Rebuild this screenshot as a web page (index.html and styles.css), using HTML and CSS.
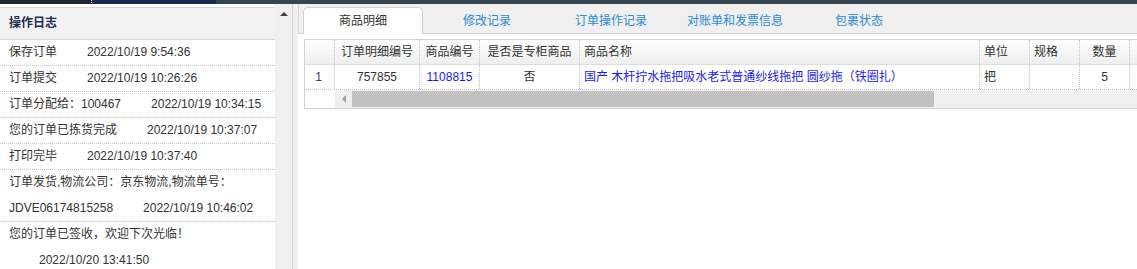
FILE: index.html
```html
<!DOCTYPE html>
<html lang="zh-CN">
<head>
<meta charset="utf-8">
<title>订单详情</title>
<link rel="stylesheet" href="styles.css">
</head>
<body>
<div class="topbar">
  <div class="seg-a"></div>
  <div class="seg-dot"></div>
  <div class="seg-b"></div>
  <div class="seg-c"></div>
</div>
<div class="main">
  <aside class="log">
    <div class="log-head">操作日志</div>
    <div class="log-row"><span>保存订单</span><span class="t">2022/10/19 9:54:36</span></div>
    <div class="log-row"><span>订单提交</span><span class="t">2022/10/19 10:26:26</span></div>
    <div class="log-row"><span>订单分配给：100467</span><span class="t">2022/10/19 10:34:15</span></div>
    <div class="log-row"><span>您的订单已拣货完成</span><span class="t">2022/10/19 10:37:07</span></div>
    <div class="log-row"><span>打印完毕</span><span class="t">2022/10/19 10:37:40</span></div>
    <div class="log-row multi">
      <div class="line">订单发货,物流公司：京东物流,物流单号：</div>
      <div class="line"><span>JDVE06174815258</span><span class="t">2022/10/19 10:46:02</span></div>
    </div>
    <div class="log-row multi last">
      <div class="line">您的订单已签收，欢迎下次光临！</div>
      <div class="line"><span class="t">2022/10/20 13:41:50</span></div>
    </div>
  </aside>
  <div class="vscroll"><span class="up"></span></div>
  <div class="splitter"></div>
  <section class="detail">
    <div class="tabs">
      <div class="tab active">商品明细</div>
      <div class="tab">修改记录</div>
      <div class="tab">订单操作记录</div>
      <div class="tab">对账单和发票信息</div>
      <div class="tab">包裹状态</div>
    </div>
    <div class="content">
      <div class="grid">
        <div class="row head">
          <div class="c c1"></div>
          <div class="c c2 center">订单明细编号</div>
          <div class="c c3 center">商品编号</div>
          <div class="c c4 center">是否是专柜商品</div>
          <div class="c c5">商品名称</div>
          <div class="c c6">单位</div>
          <div class="c c7">规格</div>
          <div class="c c8 center">数量</div>
          <div class="c c9"></div>
        </div>
        <div class="row data">
          <div class="c c1 num">1</div>
          <div class="c c2 center">757855</div>
          <div class="c c3 center link">1108815</div>
          <div class="c c4 center">否</div>
          <div class="c c5 link">国产 木杆拧水拖把吸水老式普通纱线拖把 圆纱拖（铁圈扎）</div>
          <div class="c c6">把</div>
          <div class="c c7"></div>
          <div class="c c8 center">5</div>
          <div class="c c9"></div>
        </div>
        <div class="hscroll">
          <div class="frozen"></div>
          <div class="track">
            <div class="arrow-btn"><span class="left"></span></div>
            <div class="thumb"></div>
          </div>
        </div>
      </div>
    </div>
  </section>
</div>
</body>
</html>
```

FILE: styles.css
```css
html, body {
  margin: 0;
  padding: 0;
  background: #ffffff;
  overflow: hidden;
}
body {
  width: 1137px;
  height: 269px;
  font-family: "Liberation Sans", "Noto Sans CJK SC", sans-serif;
  font-size: 12px;
  color: #333333;
  text-spacing-trim: space-all;
}

.topbar {
  display: flex;
  height: 4px;
}
.seg-a { width: 91px; background: #1f2733; }
.seg-dot { width: 1px; background: repeating-linear-gradient(#ffffff 0 1px, #1f2733 1px 2px); }
.seg-b { width: 124px; background: #172a4d; }
.seg-c { flex: 1; background: #374550; }

.main {
  display: flex;
  height: 265px;
}

/* ---------- log panel ---------- */
.log {
  width: 275px;
  flex: none;
  background: #ffffff;
  padding-top: 3px;
  box-sizing: border-box;
}
.log-head {
  height: 31px;
  line-height: 31px;
  padding-left: 9px;
  background: #f2f2f2;
  border-top: 1px solid #d6d6d6;
  border-bottom: 1px solid #d6d6d6;
  font-weight: bold;
  color: #1f2d52;
}
.log-row {
  height: 25px;
  line-height: 25px;
  padding-left: 9px;
  border-bottom: 1px dotted #c4c4c4;
  white-space: nowrap;
}
.log-row .t { margin-left: 30px; }
.log-row.multi { height: 51px; }
.log-row.multi .line { height: 25.5px; line-height: 25.5px; }
.log-row.last { border-bottom: none; height: 50px; }

.vscroll {
  width: 17px;
  flex: none;
  background: #f0f0f0;
  display: flex;
  justify-content: center;
  padding-top: 8px;
  box-sizing: border-box;
}
.up {
  width: 0;
  height: 0;
  border-left: 4px solid transparent;
  border-right: 4px solid transparent;
  border-bottom: 4px solid #404040;
}
.splitter {
  width: 5px;
  flex: none;
  background: #f0f0f0;
  border-left: 1px solid #d4d4d4;
}

/* ---------- detail ---------- */
.detail {
  flex: 1;
  min-width: 0;
  overflow: hidden;
  background: #ffffff;
}
.tabs {
  display: flex;
  align-items: flex-end;
  gap: 4px;
  height: 26px;
  padding: 3px 0 0 4px;
  background: #f0f0f0;
  border-left: 1px solid #d6d6d6;
  border-bottom: 1px solid #cfcfcf;
}
.tab {
  width: 120px;
  height: 27px;
  box-sizing: border-box;
  margin-bottom: -1px;
  line-height: 26px;
  text-align: center;
  color: #2a8ad4;
  border: 1px solid transparent;
  border-bottom: none;
}
.tab.active {
  background: #ffffff;
  color: #333333;
  border-color: #cfcfcf;
  border-radius: 5px 5px 0 0;
}

.content {
  padding: 5px 0 0 6px;
}
.grid {
  width: 960px;
  border: 1px solid #d2d2d2;
  border-right: none;
}
.row {
  display: flex;
  height: 25px;
  box-sizing: border-box;
}
.row.head {
  background: linear-gradient(#ffffff, #eeeeee);
  border-bottom: 1px solid #dddddd;
}
.row.data {
  border-bottom: 1px dotted #c4c4c4;
}
.c {
  flex: none;
  box-sizing: border-box;
  border-right: 1px dotted #c4c4c4;
  line-height: 24px;
  padding: 0 4px;
  white-space: nowrap;
  overflow: hidden;
}
.c.center { text-align: center; }
.c1 { width: 30px; text-align: center; }
.c2 { width: 85px; }
.c3 { width: 60px; }
.c4 { width: 100px; }
.c5 { width: 400px; }
.c6 { width: 50px; }
.c7 { width: 50px; }
.c8 { width: 50px; }
.c9 { width: 100px; }
.num { color: #34406a; padding-right: 6px; }
.link { color: #1a1ae6; }

.hscroll {
  display: flex;
  height: 18px;
}
.frozen {
  width: 30px;
  flex: none;
  background: #ffffff;
}
.track {
  flex: 1;
  display: flex;
  align-items: center;
  background: #f0f0f0;
}
.arrow-btn {
  width: 17px;
  height: 18px;
  display: flex;
  align-items: center;
  justify-content: center;
}
.left {
  width: 0;
  height: 0;
  border-top: 4px solid transparent;
  border-bottom: 4px solid transparent;
  border-right: 4px solid #a3a3a3;
}
.thumb {
  width: 582px;
  height: 16px;
  background: #c1c1c1;
}
```
